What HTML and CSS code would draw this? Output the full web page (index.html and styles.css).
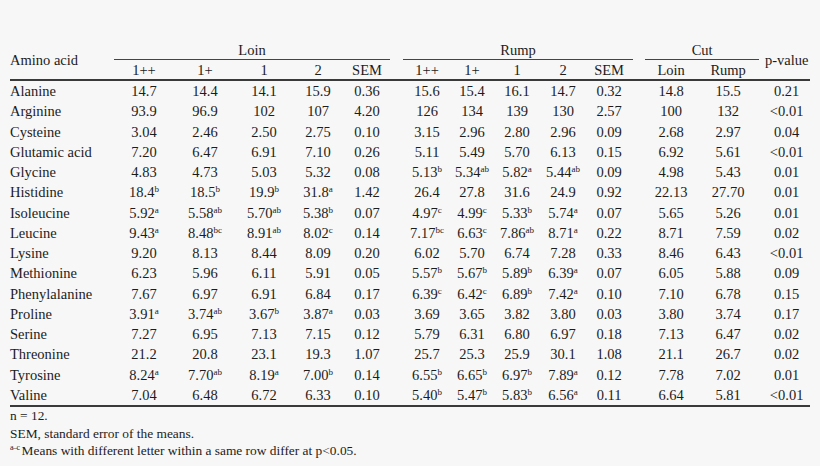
FILE: index.html
```html
<!DOCTYPE html>
<html>
<head>
<meta charset="utf-8">
<link rel="stylesheet" href="styles.css">
</head>
<body>
<div class="page">
<table class="aa">
<colgroup>
<col class="c0"><col class="w60"><col class="w62"><col class="w56"><col class="w52"><col class="w46">
<col class="g13">
<col class="w48"><col class="w42"><col class="w48"><col class="w44"><col class="w48">
<col class="g12">
<col class="w52"><col class="w62">
<col class="w51">
</colgroup>
<thead>
<tr class="h1">
<th class="name" rowspan="2">Amino acid</th>
<th class="grp" colspan="5">Loin</th>
<th class="gap"></th>
<th class="grp" colspan="5">Rump</th>
<th class="gap"></th>
<th class="grp cut" colspan="2">Cut</th>
<th class="pv" rowspan="2">p-value</th>
</tr>
<tr class="h2">
<th>1++</th><th>1+</th><th>1</th><th>2</th><th>SEM</th>
<th></th>
<th>1++</th><th>1+</th><th>1</th><th>2</th><th>SEM</th>
<th></th>
<th>Loin</th><th>Rump</th>
</tr>
</thead>
<tbody>
<tr><td class="name">Alanine</td><td>14.7</td><td>14.4</td><td>14.1</td><td>15.9</td><td>0.36</td><td></td><td>15.6</td><td>15.4</td><td>16.1</td><td>14.7</td><td>0.32</td><td></td><td>14.8</td><td>15.5</td><td class="pv">0.21</td></tr>
<tr><td class="name">Arginine</td><td>93.9</td><td>96.9</td><td>102</td><td>107</td><td>4.20</td><td></td><td>126</td><td>134</td><td>139</td><td>130</td><td>2.57</td><td></td><td>100</td><td>132</td><td class="pv">&lt;0.01</td></tr>
<tr><td class="name">Cysteine</td><td>3.04</td><td>2.46</td><td>2.50</td><td>2.75</td><td>0.10</td><td></td><td>3.15</td><td>2.96</td><td>2.80</td><td>2.96</td><td>0.09</td><td></td><td>2.68</td><td>2.97</td><td class="pv">0.04</td></tr>
<tr><td class="name">Glutamic acid</td><td>7.20</td><td>6.47</td><td>6.91</td><td>7.10</td><td>0.26</td><td></td><td>5.11</td><td>5.49</td><td>5.70</td><td>6.13</td><td>0.15</td><td></td><td>6.92</td><td>5.61</td><td class="pv">&lt;0.01</td></tr>
<tr><td class="name">Glycine</td><td>4.83</td><td>4.73</td><td>5.03</td><td>5.32</td><td>0.08</td><td></td><td>5.13<sup>b</sup></td><td>5.34<sup>ab</sup></td><td>5.82<sup>a</sup></td><td>5.44<sup>ab</sup></td><td>0.09</td><td></td><td>4.98</td><td>5.43</td><td class="pv">0.01</td></tr>
<tr><td class="name">Histidine</td><td>18.4<sup>b</sup></td><td>18.5<sup>b</sup></td><td>19.9<sup>b</sup></td><td>31.8<sup>a</sup></td><td>1.42</td><td></td><td>26.4</td><td>27.8</td><td>31.6</td><td>24.9</td><td>0.92</td><td></td><td>22.13</td><td>27.70</td><td class="pv">0.01</td></tr>
<tr><td class="name">Isoleucine</td><td>5.92<sup>a</sup></td><td>5.58<sup>ab</sup></td><td>5.70<sup>ab</sup></td><td>5.38<sup>b</sup></td><td>0.07</td><td></td><td>4.97<sup>c</sup></td><td>4.99<sup>c</sup></td><td>5.33<sup>b</sup></td><td>5.74<sup>a</sup></td><td>0.07</td><td></td><td>5.65</td><td>5.26</td><td class="pv">0.01</td></tr>
<tr><td class="name">Leucine</td><td>9.43<sup>a</sup></td><td>8.48<sup>bc</sup></td><td>8.91<sup>ab</sup></td><td>8.02<sup>c</sup></td><td>0.14</td><td></td><td>7.17<sup>bc</sup></td><td>6.63<sup>c</sup></td><td>7.86<sup>ab</sup></td><td>8.71<sup>a</sup></td><td>0.22</td><td></td><td>8.71</td><td>7.59</td><td class="pv">0.02</td></tr>
<tr><td class="name">Lysine</td><td>9.20</td><td>8.13</td><td>8.44</td><td>8.09</td><td>0.20</td><td></td><td>6.02</td><td>5.70</td><td>6.74</td><td>7.28</td><td>0.33</td><td></td><td>8.46</td><td>6.43</td><td class="pv">&lt;0.01</td></tr>
<tr><td class="name">Methionine</td><td>6.23</td><td>5.96</td><td>6.11</td><td>5.91</td><td>0.05</td><td></td><td>5.57<sup>b</sup></td><td>5.67<sup>b</sup></td><td>5.89<sup>b</sup></td><td>6.39<sup>a</sup></td><td>0.07</td><td></td><td>6.05</td><td>5.88</td><td class="pv">0.09</td></tr>
<tr><td class="name">Phenylalanine</td><td>7.67</td><td>6.97</td><td>6.91</td><td>6.84</td><td>0.17</td><td></td><td>6.39<sup>c</sup></td><td>6.42<sup>c</sup></td><td>6.89<sup>b</sup></td><td>7.42<sup>a</sup></td><td>0.10</td><td></td><td>7.10</td><td>6.78</td><td class="pv">0.15</td></tr>
<tr><td class="name">Proline</td><td>3.91<sup>a</sup></td><td>3.74<sup>ab</sup></td><td>3.67<sup>b</sup></td><td>3.87<sup>a</sup></td><td>0.03</td><td></td><td>3.69</td><td>3.65</td><td>3.82</td><td>3.80</td><td>0.03</td><td></td><td>3.80</td><td>3.74</td><td class="pv">0.17</td></tr>
<tr><td class="name">Serine</td><td>7.27</td><td>6.95</td><td>7.13</td><td>7.15</td><td>0.12</td><td></td><td>5.79</td><td>6.31</td><td>6.80</td><td>6.97</td><td>0.18</td><td></td><td>7.13</td><td>6.47</td><td class="pv">0.02</td></tr>
<tr><td class="name">Threonine</td><td>21.2</td><td>20.8</td><td>23.1</td><td>19.3</td><td>1.07</td><td></td><td>25.7</td><td>25.3</td><td>25.9</td><td>30.1</td><td>1.08</td><td></td><td>21.1</td><td>26.7</td><td class="pv">0.02</td></tr>
<tr><td class="name">Tyrosine</td><td>8.24<sup>a</sup></td><td>7.70<sup>ab</sup></td><td>8.19<sup>a</sup></td><td>7.00<sup>b</sup></td><td>0.14</td><td></td><td>6.55<sup>b</sup></td><td>6.65<sup>b</sup></td><td>6.97<sup>b</sup></td><td>7.89<sup>a</sup></td><td>0.12</td><td></td><td>7.78</td><td>7.02</td><td class="pv">0.01</td></tr>
<tr class="last"><td class="name">Valine</td><td>7.04</td><td>6.48</td><td>6.72</td><td>6.33</td><td>0.10</td><td></td><td>5.40<sup>b</sup></td><td>5.47<sup>b</sup></td><td>5.83<sup>b</sup></td><td>6.56<sup>a</sup></td><td>0.11</td><td></td><td>6.64</td><td>5.81</td><td class="pv">&lt;0.01</td></tr>
</tbody>
</table>
<div class="notes">
<p>n = 12.</p>
<p>SEM, standard error of the means.</p>
<p><sup class="fn">a–c</sup>Means with different letter within a same row differ at p&lt;0.05.</p>
</div>
</div>
</body>
</html>
```
FILE: styles.css
```css
html, body {
  margin: 0;
  padding: 0;
  background: #f7f7f7;
}
body {
  font-family: "Liberation Serif", "Times New Roman", serif;
  color: #1c1c1c;
}
.page {
  padding: 40px 10px 0 10px;
  width: 800px;
}
.aa {
  border-collapse: separate;
  border-spacing: 0;
  table-layout: fixed;
  width: 800px;
  font-size: 14.5px;
}
.c0 { width: 104px; }
.w60 { width: 60px; }
.w62 { width: 62px; }
.w56 { width: 56px; }
.w52 { width: 52px; }
.w46 { width: 46px; }
.w48 { width: 48px; }
.w42 { width: 42px; }
.w44 { width: 44px; }
.w51 { width: 51px; }
.g13 { width: 13px; }
.g12 { width: 12px; }
.aa th, .aa td {
  padding: 0;
  font-weight: normal;
  text-align: center;
  vertical-align: middle;
  white-space: nowrap;
  line-height: 16px;
}
.aa .name {
  text-align: left;
}
.aa .pv {
  padding-left: 4px;
}
.h1 { height: 20px; }
.h1 .grp {
  border-bottom: 1px solid #444;
}
.h2 { height: 21px; }
.h2 th, .aa th.name, .aa th.pv {
  border-bottom: 2px solid #3a3a3a;
}
.aa tbody tr { height: 20.25px; }
.aa tbody tr.last td {
  border-bottom: 2px solid #3a3a3a;
}
.aa tbody tr.last { height: 22.25px; }
sup {
  font-size: 9px;
  line-height: 0;
  vertical-align: 5px;
}
.notes {
  font-size: 13.4px;
  line-height: 17.5px;
  padding-top: 0;
}
.notes p {
  margin: 0;
}
sup.fn {
  font-size: 8px;
  vertical-align: 5px;
  letter-spacing: -0.5px;
  margin-right: 2px;
}
```
